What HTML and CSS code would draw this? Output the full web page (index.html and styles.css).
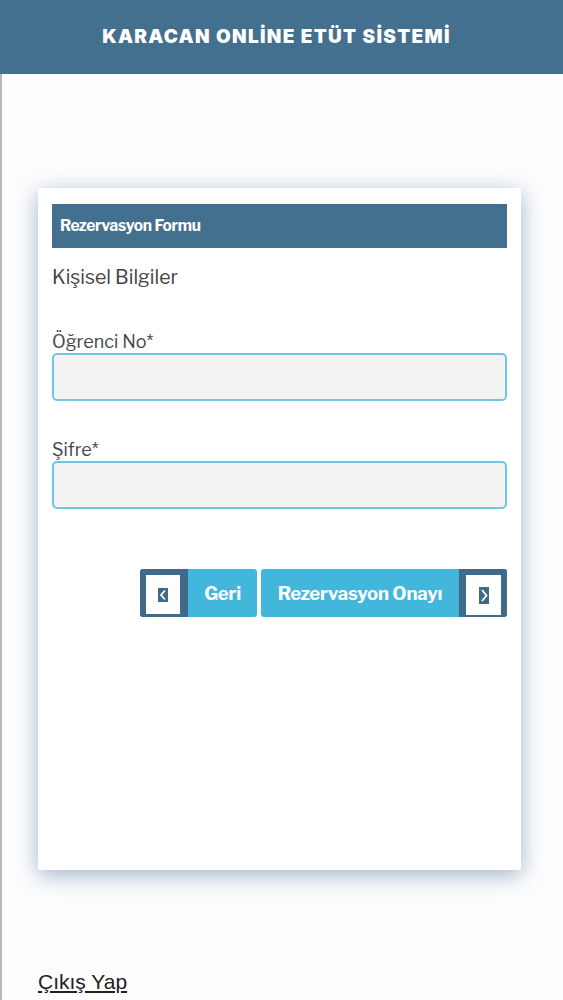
FILE: index.html
```html
<!DOCTYPE html>
<html lang="tr">
<head>
    <meta charset="UTF-8">
    <meta name="viewport" content="width=device-width, initial-scale=1.0">
    <title>Karacan Online Etüt Sistemi</title>
    <link rel="stylesheet" href="styles.css">
</head>
<body>
    <header class="topbar">
        <h1>KARACAN ONLİNE ETÜT SİSTEMİ</h1>
    </header>
    <main class="page">
        <div class="card">
            <div class="card-title">Rezervasyon Formu</div>
            <h2 class="section">Kişisel Bilgiler</h2>
            <form class="form" onsubmit="return false">
                <label for="ogrenciNo">Öğrenci No*</label>
                <input type="text" id="ogrenciNo">
                <label for="sifre" class="second">Şifre*</label>
                <input type="password" id="sifre">
                <div class="actions">
                    <button type="button" class="btn prev">
                        <span class="arrow">
                            <span class="box">
                                <svg width="10" height="14" viewBox="0 0 10 14"><rect width="10" height="14" fill="#3f6a8a"/><path d="M7 2.5 L3 7 L7 11.5" fill="none" stroke="#fff" stroke-width="1.8"/></svg>
                            </span>
                        </span>
                        <span class="label">Geri</span>
                    </button>
                    <button type="submit" class="btn next">
                        <span class="label">Rezervasyon Onayı</span>
                        <span class="arrow">
                            <span class="box">
                                <svg width="10" height="17" viewBox="0 0 10 17"><rect width="10" height="17" fill="#3f6a8a"/><path d="M3 3 L7.5 8.5 L3 14" fill="none" stroke="#fff" stroke-width="1.8"/></svg>
                            </span>
                        </span>
                    </button>
                </div>
            </form>
        </div>
        <a href="#" class="logout">Çıkış Yap</a>
    </main>
</body>
</html>
```

FILE: styles.css
```css
body {
    margin: 0;
    background-color: #fdfdfe;
    font-family: "Libre Franklin", Inter, "Noto Sans", sans-serif;
    color: #454545;
}

.topbar {
    height: 74px;
    background-color: #44708f;
    display: flex;
    align-items: center;
    justify-content: center;
}

.topbar h1 {
    margin: 0 10px 2px 0;
    color: #fff;
    font-family: Inter, sans-serif;
    font-weight: 900;
    font-size: 19px;
    letter-spacing: 1.3px;
}

.page {
    border-left: 2px solid #b9b9b9;
    padding: 114px 0 0 36px;
    height: 812px;
}

.card {
    width: 455px;
    min-height: 666px;
    background-color: #fff;
    padding: 16px 14px 0;
    border-radius: 2px;
    box-shadow: 0 5px 22px rgba(70, 110, 150, 0.5);
}

.card-title {
    height: 44px;
    line-height: 44px;
    background-color: #44708f;
    color: #fff;
    font-size: 15.5px;
    font-weight: 700;
    letter-spacing: -0.3px;
    padding-left: 8px;
}

.section {
    margin: 17px 0 0;
    font-size: 19.5px;
    font-weight: 400;
    color: #444;
}

.form {
    display: flex;
    flex-direction: column;
    margin-top: 42px;
}

.form label {
    font-size: 18px;
    margin-bottom: 1px;
}

.form label.second {
    margin-top: 38px;
}

.form input {
    height: 48px;
    box-sizing: border-box;
    border: 2px solid #6fc6df;
    border-radius: 5px;
    background-color: #f3f3f4;
}

.actions {
    display: flex;
    justify-content: flex-end;
    gap: 4px;
    margin-top: 60px;
}

.btn {
    display: flex;
    height: 48px;
    padding: 0;
    border: none;
    border-radius: 3px;
    overflow: hidden;
    background-color: #43b6dc;
    color: #fff;
    font-family: inherit;
    font-size: 18.5px;
    font-weight: 700;
    letter-spacing: -0.2px;
    cursor: pointer;
}

.btn .label {
    display: flex;
    align-items: center;
    justify-content: center;
}

.prev .label {
    width: 69px;
}

.next .label {
    width: 198px;
}

.arrow {
    width: 48px;
    background-color: #3f6a8a;
    padding: 6px 8px 3px 6px;
    box-sizing: border-box;
    display: flex;
}

.next .arrow {
    padding: 6px 6px 2px 7px;
}

.arrow .box {
    flex: 1;
    background-color: #fff;
    display: flex;
    align-items: center;
    justify-content: center;
}

.logout {
    display: inline-block;
    margin-top: 100px;
    font-family: "Liberation Sans", Arial, sans-serif;
    font-size: 21px;
    color: #222;
}
```
